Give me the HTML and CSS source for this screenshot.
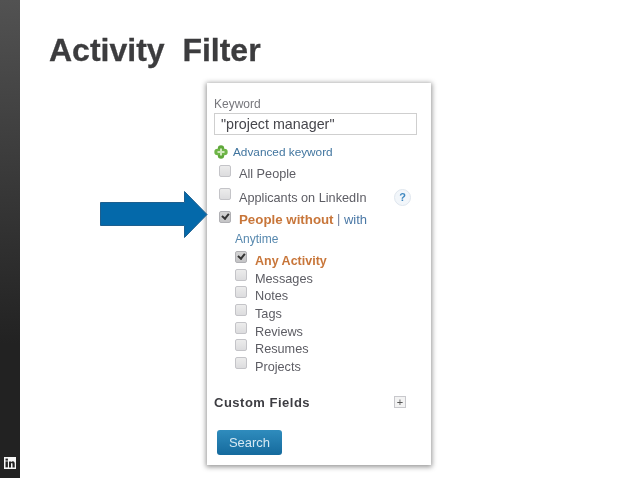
FILE: index.html
```html
<!DOCTYPE html>
<html lang="en">
<head>
<meta charset="utf-8">
<title>Activity Filter</title>
<link rel="stylesheet" href="styles.css">
</head>
<body>
<div class="slide">
  <aside class="rail">
    <svg class="li" width="12" height="12" viewBox="0 0 12 12"><rect width="12" height="12" fill="#f6f6f6"/><rect x="1.500" y="4.400" width="2.400" height="6" fill="#222"/><rect x="1.500" y="1.600" width="2.400" height="2" fill="#222"/><path d="M5 4.400h2.100v.9c.5-.7 1.100-1.050 1.800-1.050 1.300 0 1.800.95 1.800 2.350v3.800H8.500V7c0-.7-.2-1-.7-1s-.8.3-.8 1v3.400H5z" fill="#222"/></svg>
  </aside>
  <main class="content">
    <h1 class="title">Activity&nbsp; Filter</h1>
    <section class="panel">
      <div class="kw-label">Keyword</div>
      <div class="kw-input">"project manager"</div>
      <div class="adv">
        <svg width="14" height="14" viewBox="0 0 14 14"><circle cx="7" cy="3.500" r="3.200" fill="#5fa83a"/><circle cx="7" cy="10.500" r="3.200" fill="#5fa83a"/><circle cx="3.500" cy="7" r="3.200" fill="#6fb548"/><circle cx="10.500" cy="7" r="3.200" fill="#6fb548"/><path d="M6 3.500h2V6h2.500v2H8v2.500H6V8H3.500V6H6z" fill="#cfe8bd"/></svg>
        <span>Advanced keyword</span>
      </div>
      <div class="opt opt-a"><i class="cb"></i><span>All People</span></div>
      <div class="opt opt-b"><i class="cb"></i><span>Applicants on LinkedIn</span><b class="help">?</b></div>
      <div class="opt opt-c"><i class="cb on"></i><span class="hot">People without</span><span class="sep">&nbsp;|&nbsp;</span><span class="lnk">with</span></div>
      <div class="any">Anytime</div>
      <ul class="acts">
        <li><i class="cb on"></i><span class="hot">Any Activity</span></li>
        <li><i class="cb"></i><span>Messages</span></li>
        <li><i class="cb"></i><span>Notes</span></li>
        <li><i class="cb"></i><span>Tags</span></li>
        <li><i class="cb"></i><span>Reviews</span></li>
        <li><i class="cb"></i><span>Resumes</span></li>
        <li><i class="cb"></i><span>Projects</span></li>
      </ul>
      <div class="custom"><strong>Custom Fields</strong><b class="plus">+</b></div>
      <div class="btn">Search</div>
    </section>
    <svg class="arrow" width="108" height="47" viewBox="0 0 108 47"><path d="M.5 11.500H84.500V.5L107 23.500 84.500 46.500V34.500H.5z" fill="#0469aa" stroke="#1d5f8f"/></svg>
  </main>
</div>
</body>
</html>
```
FILE: styles.css
```css
html, body { margin: 0; padding: 0; background: #fff; }
body { width: 638px; height: 479px; overflow: hidden; font-family: "Liberation Sans", Arial, sans-serif; }
.slide { display: flex; width: 638px; height: 479px; }
.rail { width: 20px; height: 478px; flex: none; display: flex; justify-content: flex-start; align-items: flex-end; background: linear-gradient(#525252 0, #222 72%, #222 100%); }
.li { margin: 0 0 9px 4px; }
.content { position: relative; flex: 1; padding-left: 29px; }
.title { margin: 0; padding-top: 33px; height: 50px; font-size: 32px; line-height: 34px; font-weight: 700; color: #3c3c3e; -webkit-text-stroke: .3px #3c3c3e; filter: blur(.3px); }
.panel { box-sizing: border-box; width: 224px; height: 382px; margin-left: 158px; padding: 14px 0 0 7px; background: #fff; box-shadow: 0 1px 5px 1px rgba(0,0,0,.42); color: #5d5d64; font-size: 12.700px; filter: blur(.45px); }
.kw-label { font-size: 12px; line-height: 14px; color: #77777c; }
.kw-input { box-sizing: border-box; width: 203px; height: 22px; margin-top: 2px; padding-left: 6px; border: 1px solid #cfcfcf; font-size: 14.300px; line-height: 20px; color: #46464c; }
.adv { display: flex; align-items: center; gap: 5px; margin-top: 9px; height: 16px; color: #41759f; font-size: 11.800px; }
.opt { display: flex; align-items: flex-start; height: 16px; margin-left: 5px; }
.opt > span:first-of-type { margin-left: 8px; }
.opt span { line-height: 17px; margin-top: 1px; }
.opt-a { margin-top: 5px; }
.opt-b { margin-top: 7px; position: relative; }
.opt-b span { margin-top: 2px; }
.opt-c { margin-top: 7px; }
.opt-c span { margin-top: 0; }
.cb { display: block; flex: none; box-sizing: border-box; width: 12px; height: 12px; border: 1px solid #c4c4c8; border-radius: 2px; background: linear-gradient(#ececec, #dcdcde); position: relative; }
.cb.on { background: linear-gradient(#d4d4d4, #c4c4c6); border-color: #b0b0b4; }
.cb.on::after { content: ""; position: absolute; left: 2.500px; top: 0; width: 2.500px; height: 5px; border: solid #333; border-width: 0 2px 2px 0; transform: rotate(40deg); }
.hot { color: #c8763a; font-weight: 700; font-size: 13.300px; }
.sep { color: #6d7c9a; }
.lnk { color: #4a78a6; font-size: 13px; }
.help { position: absolute; left: 175px; top: 1px; width: 17px; height: 17px; border-radius: 50%; background: #f2f6fa; border: 1px solid #dfe6ee; box-sizing: border-box; color: #3f88c0; font-size: 11px; line-height: 15px; text-align: center; }
.any { margin: 4px 0 0 21px; height: 16px; line-height: 16px; font-size: 12px; color: #5788ae; }
.acts { list-style: none; margin: 4px 0 0 21px; padding: 0; }
.acts li { display: flex; height: 17.700px; line-height: 18px; }
.acts li span { margin-left: 8px; margin-top: 1px; }
.acts .hot { font-size: 12.500px; }
.custom { display: flex; align-items: center; justify-content: space-between; width: 192px; margin-top: 19px; height: 17px; }
.custom strong { font-size: 13px; color: #3d3d42; letter-spacing: .5px; }
.plus { box-sizing: border-box; width: 12px; height: 12px; border: 1px solid #c8c8cc; background: #f3f3f3; color: #555; font-size: 11px; line-height: 10px; text-align: center; font-weight: 400; }
.btn { box-sizing: border-box; width: 65px; height: 25px; margin: 19px 0 0 3px; border-radius: 3px; background: linear-gradient(#2f8cbd, #156a9d); color: #d5e8f2; font-size: 13px; line-height: 26px; text-align: center; }
.arrow { position: absolute; left: 80px; top: 191px; }
```
